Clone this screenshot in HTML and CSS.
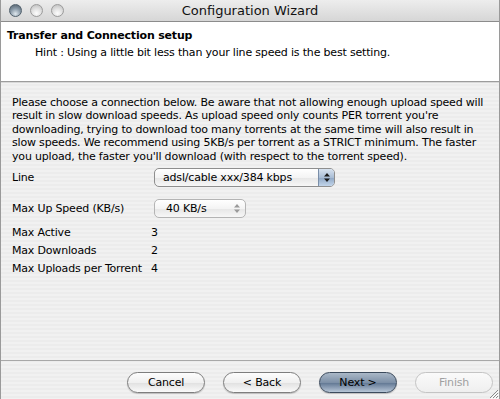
FILE: index.html
```html
<!DOCTYPE html>
<html lang="en">
<head>
    <meta charset="UTF-8">
    <title>Configuration Wizard</title>
    <link rel="stylesheet" href="styles.css">
</head>
<body>
    <div class="window">
        <div class="titlebar">
            <div class="lights">
                <span class="light graphite"></span>
                <span class="light"></span>
                <span class="light"></span>
            </div>
            <div class="title">Configuration Wizard</div>
        </div>

        <div class="header">
            <div class="step">Transfer and Connection setup</div>
            <div class="hint">Hint : Using a little bit less than your line speed is the best setting.</div>
        </div>

        <div class="content">
            <p class="info">Please choose a connection below. Be aware that not allowing enough upload speed will result in slow download speeds. As upload speed only counts PER torrent you're downloading, trying to download too many torrents at the same time will also result in slow speeds. We recommend using 5KB/s per torrent as a STRICT minimum. The faster you upload, the faster you'll download (with respect to the torrent speed).</p>

            <div class="form">
                <div class="row">
                    <span class="label">Line</span>
                    <div class="popup line">
                        <span class="value">adsl/cable xxx/384 kbps</span>
                        <span class="arrows">
                            <svg width="8" height="11" viewBox="0 0 8 11"><path d="M4 1 L7 4.5 H1 Z M4 10 L7 6.5 H1 Z" fill="#1a1a1a"/></svg>
                        </span>
                    </div>
                </div>
                <div class="row">
                    <span class="label">Max Up Speed (KB/s)</span>
                    <div class="popup speed">
                        <span class="value">40 KB/s</span>
                        <span class="arrows">
                            <svg width="8" height="11" viewBox="0 0 8 11"><path d="M4 1 L7 4.5 H1 Z M4 10 L7 6.5 H1 Z" fill="#9a9a9a"/></svg>
                        </span>
                    </div>
                </div>
                <div class="row small"><span class="label">Max Active</span><span>3</span></div>
                <div class="row small"><span class="label">Max Downloads</span><span>2</span></div>
                <div class="row small"><span class="label">Max Uploads per Torrent</span><span>4</span></div>
            </div>
        </div>

        <div class="footer">
            <button class="btn">Cancel</button>
            <button class="btn">&lt; Back</button>
            <button class="btn default">Next &gt;</button>
            <button class="btn disabled">Finish</button>
            <svg class="grip" width="12" height="12" viewBox="0 0 12 12">
                <path d="M11 3 L3 11 M11 6 L6 11 M11 9 L9 11" stroke="#8a8a8a" stroke-width="1"/>
                <path d="M12 4 L4 12 M12 7 L7 12 M12 10 L10 12" stroke="#fff" stroke-width="1"/>
            </svg>
        </div>
    </div>
</body>
</html>
```

FILE: styles.css
```css
* { box-sizing: border-box; }
html, body { margin: 0; padding: 0; }
body { font-family: "DejaVu Sans", "Lucida Grande", sans-serif; font-size: 11px; letter-spacing: -0.18px; color: #000; }

.window {
    width: 500px;
    height: 399px;
    display: flex;
    flex-direction: column;
    background: repeating-linear-gradient(to bottom, #ececec 0, #ececec 2px, #f1f1f1 2px, #f1f1f1 4px);
    border-left: 1px solid #9a9a9a;
    border-right: 1px solid #9a9a9a;
    overflow: hidden;
}

.titlebar {
    height: 22px;
    flex: none;
    display: flex;
    align-items: center;
    position: relative;
    background: linear-gradient(to bottom, #ededed, #d6d6d6);
    border-bottom: 1px solid #8c8c8c;
}
.lights { display: flex; gap: 8px; padding-left: 8px; }
.light {
    width: 13px; height: 13px; border-radius: 50%;
    border: 1px solid #9b9b9b;
    background: radial-gradient(circle at 50% 75%, #fdfdfd 0, #e2e2e2 45%, #b9b9b9 100%);
}
.light.graphite {
    border-color: #51606c;
    background: radial-gradient(circle at 50% 80%, #dfe8ee 0, #8a9aa8 50%, #4d5a66 100%);
}
.title {
    position: absolute; left: 0; right: 0; top: 3px;
    text-align: center; font-size: 13px; letter-spacing: 0; color: #111;
}

.header {
    height: 60px;
    flex: none;
    background: #fff;
    padding: 7px 6px 0;
    border-bottom: 1px solid #9c9c9c;
    box-shadow: 0 1px 0 #d8d8d8;
}
.step { font-weight: bold; font-size: 11px; }
.hint { padding-left: 28px; margin-top: 4px; }

.content { flex: 1; padding: 14px 11px 0; }
.info { margin: 0; line-height: 13.4px; }

.form { margin-top: 5px; display: flex; flex-direction: column; }
.row { display: flex; align-items: center; }
.row .label { width: 142px; flex: none; }
.row + .row { margin-top: 12px; }
.row.small + .row.small { margin-top: 5px; }
.row.small { margin-top: 8px; }
.row.small .label { width: 139px; }

.popup {
    height: 19px;
    display: flex;
    align-items: center;
    justify-content: space-between;
    border: 1px solid #8e8e8e;
    border-radius: 5px;
    background: linear-gradient(to bottom, #ffffff 0, #f4f4f4 50%, #e6e6e6 51%, #f7f7f7 100%);
    overflow: hidden;
}
.popup .value { padding-left: 8px; }
.popup .arrows {
    width: 16px; height: 100%;
    display: flex; align-items: center; justify-content: center;
}
.line { width: 181px; }
.line .arrows {
    background: linear-gradient(to bottom, #d7e2ef 0, #a9bdd5 50%, #8ea6c4 51%, #c2d5ea 100%);
    border-left: 1px solid #7a8ea8;
}
.speed { width: 92px; border-color: #b4b4b4; }
.speed .value { padding-left: 11px; }

.footer {
    height: 39px;
    flex: none;
    display: flex;
    align-items: flex-start;
    padding: 11px 0 0 126px;
    gap: 18px;
    border-top: 1px solid #a8a8a8;
    position: relative;
}
.btn {
    width: 78px;
    height: 21px;
    padding: 0;
    font-family: inherit;
    font-size: 11px;
    letter-spacing: inherit;
    color: #000;
    border: 1px solid #7e7e7e;
    border-radius: 11px;
    background: linear-gradient(to bottom, #fdfdfd 0, #f0f0f0 50%, #e0e0e0 51%, #fafafa 100%);
    box-shadow: 0 1px 1px rgba(0, 0, 0, 0.2);
}
.btn.default {
    border-color: #3b4a5c;
    background: linear-gradient(to bottom, #aab8c8 0, #7d90a7 50%, #5f7591 51%, #b6c5d6 100%);
}
.btn.disabled {
    color: #a0a0a0;
    border-color: #c4c4c4;
    box-shadow: none;
    background: linear-gradient(to bottom, #fafafa, #efefef);
}
.grip { position: absolute; right: 0; bottom: 0; }
```
